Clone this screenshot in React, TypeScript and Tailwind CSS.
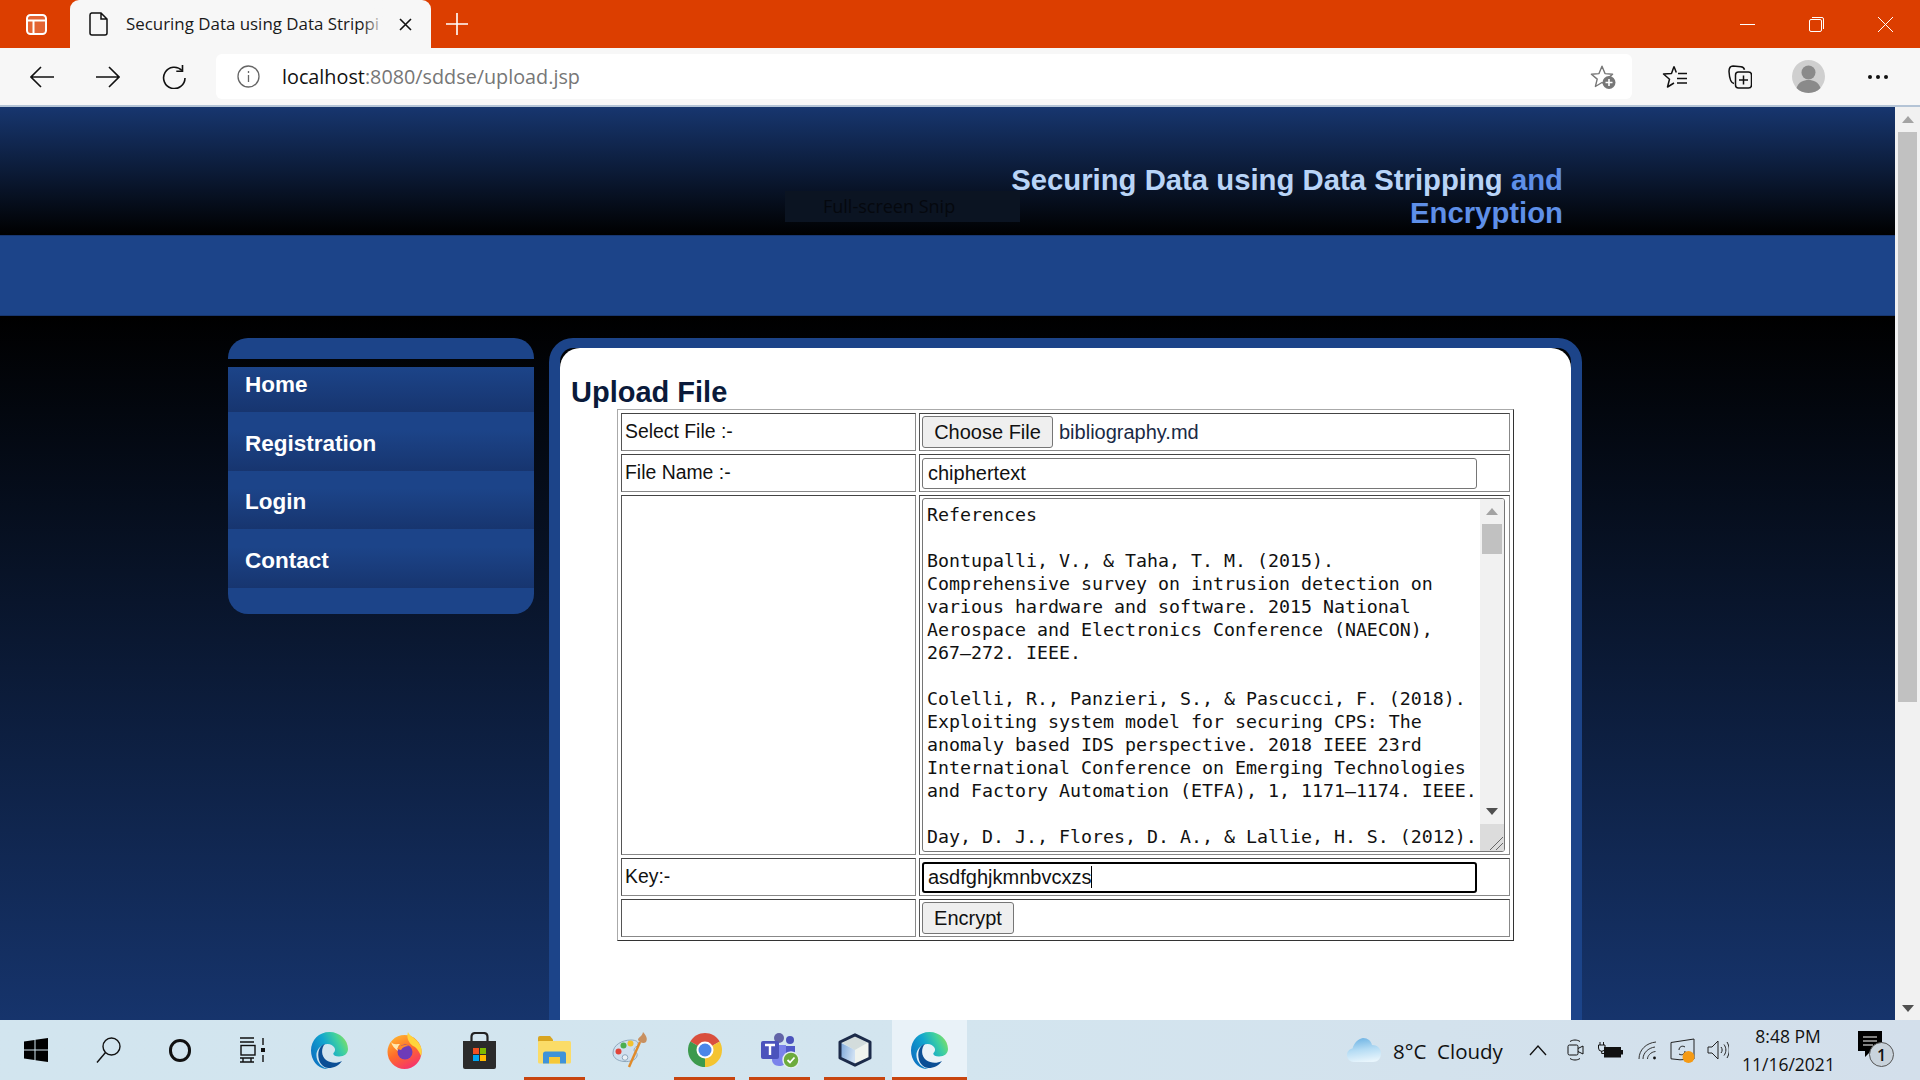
import type { ReactNode } from 'react';

const LINES = [
  'References',
  '',
  'Bontupalli, V., & Taha, T. M. (2015).',
  'Comprehensive survey on intrusion detection on',
  'various hardware and software. 2015 National',
  'Aerospace and Electronics Conference (NAECON),',
  '267–272. IEEE.',
  '',
  'Colelli, R., Panzieri, S., & Pascucci, F. (2018).',
  'Exploiting system model for securing CPS: The',
  'anomaly based IDS perspective. 2018 IEEE 23rd',
  'International Conference on Emerging Technologies',
  'and Factory Automation (ETFA), 1, 1171–1174. IEEE.',
  '',
  'Day, D. J., Flores, D. A., & Lallie, H. S. (2012).',
];

const NAV = ['Registration', 'Login', 'Contact'];

const labelCell =
  'border border-t-[#444] border-l-[#555] border-r-[#888] border-b-[#888] pl-[3px] align-middle text-[19.4px] text-[#111]';
const controlCell =
  'border border-t-[#444] border-l-[#555] border-r-[#888] border-b-[#888] pl-[2px] align-middle';
const buttonClass =
  'rounded-[3px] border border-[#767676] bg-[#efefef] text-[20px] leading-none text-[#111]';

/* ---------- browser chrome icons ---------- */

function BackIcon({ flip }: { flip?: boolean }) {
  return (
    <svg width="24" height="22" viewBox="0 0 24 22" fill="none" stroke="#111" strokeWidth="1.6" className={flip ? '-scale-x-100' : ''}>
      <path d="M24 11H1M11 1 1 11l10 10" />
    </svg>
  );
}

function ReloadIcon() {
  return (
    <svg width="24" height="24" viewBox="0 0 24 24" fill="none" stroke="#111" strokeWidth="1.6">
      <path d="M20 5.5A10.7 10.7 0 1 0 23 13" />
      <path d="M20.5 0v6.2h-6.2" />
    </svg>
  );
}

function StarAddIcon() {
  return (
    <svg width="26" height="24" viewBox="0 0 26 24" fill="none">
      <path d="M12 1.2 15 8.6l7.6.6-5.8 4.9 1.8 7.4L12 17.5l-6.6 4 1.8-7.4L1.4 9.2 9 8.6Z" stroke="#777" strokeWidth="1.4" strokeLinejoin="round" />
      <circle cx="19" cy="17.5" r="6.5" fill="#777" />
      <path d="M19 14v7M15.5 17.5h7" stroke="#fff" strokeWidth="1.6" />
    </svg>
  );
}

function FavoritesIcon() {
  return (
    <svg width="26" height="24" viewBox="0 0 26 24" fill="none" stroke="#111" strokeWidth="1.5" strokeLinejoin="round">
      <path d="M12 1.5 9.5 8.5 1.5 9l6 5.2L5.5 22l6.5-4M12 1.5l2.3 6" />
      <path d="M16 8.5h9M15 13.5h10M15 18h10" />
    </svg>
  );
}

function CollectionsIcon() {
  return (
    <svg width="24" height="24" viewBox="0 0 24 24" fill="none" stroke="#111" strokeWidth="1.5">
      <path d="M6 18.5C3 18 1.5 15 1 6.5 1 3 2 1 5 1l8 .8c2 .2 3 1.2 3.5 3" />
      <rect x="7.5" y="7" width="16" height="16" rx="3" />
      <path d="M15.5 10.5v9M11 15h9" />
    </svg>
  );
}

function ProfileIcon() {
  return (
    <svg width="33" height="33" viewBox="0 0 33 33">
      <circle cx="16.5" cy="16.5" r="16.5" fill="#cfcfcf" />
      <circle cx="16.5" cy="12.5" r="7" fill="#8a8a8a" />
      <path d="M4.5 28c2-6 7-8 12-8s10 2 12 8c-6 6.5-18 6.5-24 0Z" fill="#8a8a8a" />
    </svg>
  );
}

/* ---------- taskbar app icons ---------- */

function EdgeIcon() {
  return (
    <svg width="37" height="37" viewBox="0 0 37 37">
      <defs>
        <linearGradient id="edge-a" x1="0" y1="0.8" x2="1" y2="0.3">
          <stop offset="0" stopColor="#0c6cc0" />
          <stop offset="0.5" stopColor="#12a6cf" />
          <stop offset="0.8" stopColor="#3fd0a0" />
          <stop offset="1" stopColor="#7bdc6a" />
        </linearGradient>
      </defs>
      <path d="M18.5 0C29 0 37 8 37 17c0 4.5-3.5 7.5-9 7.5-4 0-6.5-1.5-5.500-3.500 1.500-1.500 2-3.200 1-5.200-2-3.800-7-5-11.500-2.800-6 3-8 9.500-5.500 15.500 2 4.500 6 7.500 11 8.500C8 38 0 29 0 18.500 0 8 8 0 18.500 0Z" fill="url(#edge-a)" />
      <path d="M8 28C6 21 8 14 14 11.800 10 16 10 24 15 28c5 3.500 11 3.500 16 1-3 4.500-8 7-13.500 7-4 0-8-3.500-9.500-8Z" fill="#0b4f95" />
    </svg>
  );
}

function FirefoxIcon() {
  return (
    <svg width="35" height="37" viewBox="0 0 35 37">
      <defs>
        <linearGradient id="ff-a" x1="0.2" y1="0" x2="0.7" y2="1">
          <stop offset="0" stopColor="#ffb52e" />
          <stop offset="0.5" stopColor="#ff6a2b" />
          <stop offset="1" stopColor="#f5306f" />
        </linearGradient>
      </defs>
      <circle cx="17.5" cy="20" r="17" fill="url(#ff-a)" />
      <path d="M21 0c1 4 10 7 13 15 1 3 1 6 0 9-2-5-5-9-8-10-4-3-7-8-5-14Z" fill="#ffd43b" />
      <path d="M4 10c2 3 6 2 9 2-2 2-3 4-2 7-3-2-6-5-7-9Z" fill="#ffe9b0" />
      <circle cx="18" cy="20" r="7.5" fill="#6e3bb8" />
      <path d="M10 17c2-4 9-5 12-3-4 0-6 1-8 4Z" fill="#ff8a2b" />
    </svg>
  );
}

function StoreIcon() {
  return (
    <svg width="35" height="37" viewBox="0 0 35 37">
      <path d="M9.5 10V5c0-2.500 1.500-4 4-4h8c2.500 0 4 1.500 4 4v5" fill="none" stroke="#222" strokeWidth="2.2" />
      <path d="M1 9h33v26a2 2 0 0 1-2 2H3a2 2 0 0 1-2-2Z" fill="#2b2b2b" />
      <rect x="11" y="16" width="6" height="6" fill="#f25022" />
      <rect x="18" y="16" width="6" height="6" fill="#7fba00" />
      <rect x="11" y="23" width="6" height="6" fill="#00a4ef" />
      <rect x="18" y="23" width="6" height="6" fill="#ffb900" />
    </svg>
  );
}

function ExplorerIcon() {
  return (
    <svg width="33" height="28" viewBox="0 0 33 28">
      <path d="M0 2a2 2 0 0 1 2-2h10l3 3.5v2H0Z" fill="#d9a520" />
      <rect x="0" y="5" width="33" height="22.5" rx="1.5" fill="#fbdc68" />
      <path d="M5 27.5V18a2.500 2.500 0 0 1 2.500-2.500h18A2.500 2.500 0 0 1 28 18v9.500h-6V21H11v6.500Z" fill="#3f93d9" />
      <rect x="11" y="21" width="11" height="6.5" fill="#f6c838" />
    </svg>
  );
}

function PaintIcon() {
  return (
    <svg width="36" height="36" viewBox="0 0 36 36">
      <path d="M1 21c0-8 9-13 18-13 5 0 8 2 7 5-1 2-4 2-4 5 0 2 4 2 3 6-1 4-7 6-13 5.500C6 29 1 26 1 21Z" fill="#cfe0ef" stroke="#8fa8bd" />
      <circle cx="6.5" cy="19.5" r="3" fill="#e0453a" />
      <circle cx="11.5" cy="13.5" r="3" fill="#4cae4f" />
      <circle cx="18.5" cy="11.5" r="3" fill="#f2c230" />
      <circle cx="13" cy="25.5" r="2.8" fill="#eaf1f7" stroke="#8fa8bd" />
      <path d="M28 10 17 35" stroke="#e08a2a" strokeWidth="2.4" />
      <path d="M26 8c0-3 4-3 5-8 3 3 5 7 3 10-2 2-6 1-8-2Z" fill="#c89060" />
    </svg>
  );
}

function ChromeIcon() {
  return (
    <svg width="34" height="34" viewBox="0 0 34 34">
      <path d="M17 17 2.3 8.500A17 17 0 0 1 31.700 8.500Z" fill="#d94f3d" />
      <path d="M17 17 31.700 8.500A17 17 0 0 1 17 34Z" fill="#f4c430" />
      <path d="M17 17 17 34A17 17 0 0 1 2.300 8.500Z" fill="#3c9a4d" />
      <circle cx="17" cy="17" r="8.5" fill="#fff" />
      <circle cx="17" cy="17" r="6.5" fill="#4a86e8" />
    </svg>
  );
}

function TeamsIcon() {
  return (
    <svg width="40" height="36" viewBox="0 0 40 36">
      <circle cx="19" cy="6" r="5" fill="#6264a7" />
      <circle cx="30" cy="8" r="4" fill="#4b53bc" />
      <path d="M12 13h14v16c0 3-3 5-7 5s-7-3-7-6Z" fill="#7b83eb" />
      <path d="M26 14h9v11c0 3-3 4-9 4Z" fill="#5059c9" />
      <rect x="1" y="9" width="18" height="18" rx="2" fill="#4b53bc" />
      <path d="M5 13h10M10 13v10" stroke="#fff" strokeWidth="2.4" />
      <circle cx="31" cy="28" r="8" fill="#6dab3c" stroke="#e4eef0" strokeWidth="1.5" />
      <path d="m27.5 28 2.500 2.500 4.500-5" fill="none" stroke="#fff" strokeWidth="1.8" />
    </svg>
  );
}

function CubeIcon() {
  return (
    <svg width="34" height="34" viewBox="0 0 34 34">
      <defs>
        <linearGradient id="cube-a" x1="0" y1="0" x2="1" y2="0.3">
          <stop offset="0" stopColor="#7ea8da" />
          <stop offset="1" stopColor="#cfe0f3" />
        </linearGradient>
      </defs>
      <path d="M3 10 17 17v15L3 25Z" fill="url(#cube-a)" />
      <path d="M3 9 17 2l14 7-14 8Z" fill="#d3dcdc" />
      <path d="M17 17l14-8v16l-14 7Z" fill="#f0f3ee" />
      <path d="M17 1.800 32 9v16l-15 7.200L2 25V9Z" fill="none" stroke="#1c2b4a" strokeWidth="3" strokeLinejoin="round" />
    </svg>
  );
}

/* ---------- tray icons ---------- */

function CloudIcon() {
  return (
    <svg width="34" height="26" viewBox="0 0 34 26">
      <defs>
        <linearGradient id="cloud-a" x1="0.3" y1="0" x2="0.5" y2="1">
          <stop offset="0" stopColor="#6fb4e4" />
          <stop offset="0.5" stopColor="#b5dcf4" />
          <stop offset="1" stopColor="#e8f5fc" />
        </linearGradient>
      </defs>
      <path d="M7 25C3 25 0 22 0 18c0-3.500 2.500-6 5.500-6.500C7 6 11 2 16 1c5 0 8 3 9 7 5 0 9 3 9 8.500 0 5-3.500 8.500-8 8.500Z" fill="url(#cloud-a)" />
    </svg>
  );
}

function CameraIcon() {
  return (
    <svg width="18" height="22" viewBox="0 0 18 22" fill="none" stroke="#111" strokeWidth="1">
      <path d="M3 2.500C6 .5 10 .5 13 2.500M3 19.500c3 2 7 2 10 0" />
      <rect x="1" y="6" width="10" height="10" rx="1.5" />
      <path d="m11 9.500 5-2.500v8l-5-2.500" />
    </svg>
  );
}

function BatteryIcon() {
  return (
    <svg width="25" height="17" viewBox="0 0 25 17" fill="none">
      <path d="M2 0v3M5.500 0v3M.5 3h6.500v3a3.200 3.200 0 0 1-6.500 0ZM3.700 9v2.500H6" stroke="#111" strokeWidth="1" />
      <rect x="6" y="5" width="17" height="10.5" fill="#111" />
      <rect x="23" y="8" width="2" height="4.5" fill="#111" />
    </svg>
  );
}

function WifiIcon() {
  return (
    <svg width="19" height="19" viewBox="0 0 19 19" fill="none" stroke="#333" strokeWidth="1">
      <path d="M1 18C1 9 8 2 18 1M5 18c0-6 5-11 12-12M9.500 18c0-3 3-7 8-7.500" />
      <circle cx="16.5" cy="17" r="1.4" fill="#111" stroke="none" />
    </svg>
  );
}

function SyncIcon() {
  return (
    <svg width="25" height="25" viewBox="0 0 25 25">
      <path d="M1 4.500 24 1v20l-14 .8-9-1Z" fill="none" stroke="#222" strokeWidth="1" />
      <path d="M15 9c-3-2-6 0-6 3M9 16c3 2 6 0 6-3" fill="none" stroke="#222" strokeWidth="1" />
      <circle cx="18.5" cy="19" r="6" fill="#f59a14" />
    </svg>
  );
}

function SpeakerIcon() {
  return (
    <svg width="22" height="22" viewBox="0 0 22 22" fill="none" stroke="#222" strokeWidth="1">
      <path d="M1 8h4l6-6v18l-6-6H1Z" />
      <path d="M14 8c1.500 2 1.500 4 0 6M17 5.500c2.500 3.500 2.500 7.500 0 11M20 3c3 5 3 11 0 16" />
    </svg>
  );
}

function TriangleIcon({ down, color }: { down?: boolean; color: string }) {
  return (
    <svg width="12" height="7" viewBox="0 0 12 7" className={down ? 'rotate-180' : ''}>
      <path d="M6 0 12 7H0Z" fill={color} />
    </svg>
  );
}

function TaskSlot({ children, mark, active }: { children: ReactNode; mark?: boolean; active?: boolean }) {
  return (
    <div className={`relative flex h-full w-[75px] items-center justify-center ${active ? 'bg-[#e9f2f8]' : ''}`}>
      {children}
      {(mark || active) && (
        <div className={`absolute bottom-0 h-[3px] bg-[#c8450f] ${active ? 'inset-x-0' : 'left-[7px] w-[61px]'}`} />
      )}
    </div>
  );
}

export default function App() {
  return (
    <div className="flex h-[1080px] w-[1920px] flex-col overflow-hidden font-['Liberation_Sans',sans-serif]">
      {/* Tab strip */}
      <div className="flex h-12 shrink-0 items-center bg-[#dc3e00] text-white">
        <div className="flex w-[70px] justify-center pl-[2px]">
          <svg width="21" height="21" viewBox="0 0 21 21" fill="#ffffff33" stroke="#fff" strokeWidth="2">
            <rect x="1" y="1" width="19" height="19" rx="3.5" />
            <path d="M1 6.500h19M7.500 6.500V20" />
          </svg>
        </div>
        <div className="relative flex h-12 w-[361px] items-center rounded-t-[9px] bg-[#f7f7f7] pl-[19px] font-['Open_Sans',sans-serif] text-[#1a1a1a]">
          <svg width="19" height="24" viewBox="0 0 19 24" fill="none" stroke="#111" strokeWidth="1.5">
            <path d="M2.500 1H12l6 6v14a2 2 0 0 1-2 2H3a2 2 0 0 1-2-2V3a2 2 0 0 1 1.500-2ZM12 1v6h6" />
          </svg>
          <span className="ml-[18px] w-[262px] whitespace-nowrap text-[16.9px]">Securing Data using Data Strippi</span>
          <div className="absolute left-[292px] top-0 h-12 w-[24px] bg-gradient-to-r from-transparent to-[#f7f7f7]" />
          <svg className="ml-[11px]" width="13" height="13" viewBox="0 0 13 13" stroke="#111" strokeWidth="1.6">
            <path d="m1 1 11 11M12 1 1 12" />
          </svg>
        </div>
        <svg className="ml-[15px]" width="22" height="22" viewBox="0 0 22 22" stroke="#fff" strokeWidth="1.6">
          <path d="M11 0v22M0 11h22" />
        </svg>
        <div className="ml-auto flex items-center gap-[54px] pr-[27px]">
          <svg width="15" height="15" viewBox="0 0 15 15" stroke="#fff" strokeWidth="1">
            <path d="M0 7.500h15" />
          </svg>
          <svg width="15" height="15" viewBox="0 0 15 15" fill="none" stroke="#fff" strokeWidth="1">
            <rect x="0.5" y="2.5" width="12" height="12" rx="1.5" />
            <path d="M3 .5h10a1.500 1.500 0 0 1 1.500 1.500v10" />
          </svg>
          <svg width="15" height="15" viewBox="0 0 15 15" stroke="#fff" strokeWidth="1">
            <path d="m0 0 15 15M15 0 0 15" />
          </svg>
        </div>
      </div>

      {/* Toolbar */}
      <div className="flex h-[59px] shrink-0 items-center border-b-2 border-[#b4c4d6] bg-[#f7f7f7] pl-[30px]">
        <BackIcon />
        <div className="ml-[42px]">
          <BackIcon flip />
        </div>
        <div className="ml-[42px]">
          <ReloadIcon />
        </div>
        <div className="ml-[30px] flex h-[45px] w-[1416px] items-center rounded-[6px] bg-white pl-[21px] font-['Open_Sans',sans-serif]">
          <svg width="23" height="23" viewBox="0 0 23 23" fill="none" stroke="#666" strokeWidth="1.3">
            <circle cx="11.5" cy="11.5" r="10.5" />
            <path d="M11.500 10v7M11.500 6v2" />
          </svg>
          <span className="ml-[22px] text-[19.8px] text-[#111]">
            localhost<span className="text-[#767676]">:8080/sddse/upload.jsp</span>
          </span>
          <div className="ml-auto pr-[16px]">
            <StarAddIcon />
          </div>
        </div>
        <div className="ml-[30px]">
          <FavoritesIcon />
        </div>
        <div className="ml-[40px]">
          <CollectionsIcon />
        </div>
        <div className="ml-[40px]">
          <ProfileIcon />
        </div>
        <div className="ml-[43px] flex gap-[4px]">
          <div className="h-1 w-1 rounded-full bg-[#111]" />
          <div className="h-1 w-1 rounded-full bg-[#111]" />
          <div className="h-1 w-1 rounded-full bg-[#111]" />
        </div>
      </div>

      {/* Page + scrollbar */}
      <div className="flex min-h-0 flex-1">
        <div className="flex min-w-0 flex-1 flex-col overflow-hidden">
          <header className="relative h-[128px] shrink-0 bg-linear-to-b/srgb from-[#17366f] to-black pr-[332px] pt-[56px]">
            <h1 className="text-right text-[29.3px] font-bold leading-[33px] text-[#b9d4f7]">
              <span>Securing Data using Data Stripping </span>
              <span className="text-[#5e8fe8]">and</span>
              <br />
              <span className="text-[#5e8fe8]">Encryption</span>
            </h1>
            {/* snipping tool hint left over on the capture */}
            <div className="absolute left-[785px] top-[84px] flex h-[31px] w-[235px] items-center bg-[#0b1422] pl-[38px] font-['Open_Sans',sans-serif] text-[18px] text-[#05080e]">
              Full-screen Snip
            </div>
          </header>
          <div className="h-[81px] shrink-0 border-y border-[#17366f] bg-[#1c4489]" />

          <div className="flex min-h-0 flex-1 gap-[15px] bg-linear-to-b/srgb from-black to-[#16346c] pl-[228px] pt-[22px]">
            <nav className="w-[306px] shrink-0">
              <div className="h-[21px] rounded-t-[20px] bg-[#1c4489]" />
              <div className="mt-[8px] flex h-[45px] items-end bg-linear-to-b/srgb from-[#1c4489] to-[#17356f] pb-[14px] pl-[17px] text-[22.5px] font-bold leading-[26px] text-white">
                Home
              </div>
              {NAV.map((item) => (
                <div
                  key={item}
                  className="flex h-[58.5px] items-end bg-linear-to-b/srgb from-[#1c4489] from-30% to-[#17356f] pb-[14px] pl-[17px] text-[22.5px] font-bold leading-[26px] text-white"
                >
                  {item}
                </div>
              ))}
              <div className="h-[26px] rounded-b-[20px] bg-[#1c4489]" />
            </nav>

            <main className="w-[1033px] shrink-0 rounded-t-[24px] border-x-[11px] border-t-[10px] border-[#1c4489]">
              <div className="h-full rounded-t-[20px] bg-white pl-[11px] pt-[28px]">
                <h2 className="text-[29px] font-bold leading-[33px] text-[#0a1a3a]">Upload File</h2>
                <table className="ml-[46px] w-[897px] table-fixed border-separate border-spacing-[3px] border border-b-[#333] border-l-[#aaa] border-r-[#333] border-t-[#aaa]">
                  <colgroup>
                    <col className="w-[295px]" />
                    <col />
                  </colgroup>
                  <tbody>
                    <tr className="h-[38px]">
                      <td className={labelCell}>Select File :-</td>
                      <td className={controlCell}>
                        <div className="flex items-center">
                          <button className={`h-[32px] w-[131px] ${buttonClass}`}>Choose File</button>
                          <span className="ml-[6px] text-[20px] text-[#1a2a45]">bibliography.md</span>
                        </div>
                      </td>
                    </tr>
                    <tr className="h-[38px]">
                      <td className={labelCell}>File Name :-</td>
                      <td className={controlCell}>
                        <div className="flex h-[31px] w-[555px] items-center rounded-[3px] border border-[#767676] pl-[5px] text-[20px] text-[#111]">
                          chiphertext
                        </div>
                      </td>
                    </tr>
                    <tr className="h-[360px]">
                      <td className={labelCell} />
                      <td className={controlCell}>
                        <div className="flex h-[354px] w-[583px] overflow-hidden rounded-[3px] border border-[#767676]">
                          <div className="min-w-0 flex-1 overflow-hidden whitespace-pre pl-[4px] pt-[4px] font-['DejaVu_Sans_Mono',monospace] text-[18.27px] leading-[23.03px] text-[#111]">
                            {LINES.join('\n')}
                          </div>
                          <div className="flex w-[24px] shrink-0 flex-col bg-[#f1f1f1]">
                            <div className="flex h-[25px] items-center justify-center">
                              <TriangleIcon color="#a3a3a3" />
                            </div>
                            <div className="mx-[2px] h-[30px] bg-[#c1c1c1]" />
                            <div className="flex-1" />
                            <div className="flex h-[25px] items-center justify-center">
                              <TriangleIcon down color="#505050" />
                            </div>
                            <div className="flex h-[27px] items-end justify-end bg-[#dcdcdc] pb-[1px] pr-[1px]">
                              <svg width="14" height="14" viewBox="0 0 14 14" stroke="#666" strokeWidth="1">
                                <path d="M1 14 14 1M7 14l7-7" />
                              </svg>
                            </div>
                          </div>
                        </div>
                      </td>
                    </tr>
                    <tr className="h-[38px]">
                      <td className={labelCell}>Key:-</td>
                      <td className={controlCell}>
                        <div className="flex h-[31px] w-[555px] items-center rounded-[3px] border-2 border-black pl-[4px] text-[20px] text-[#111]">
                          asdfghjkmnbvcxzs
                          <div className="h-[22px] w-px bg-black" />
                        </div>
                      </td>
                    </tr>
                    <tr className="h-[38px]">
                      <td className={labelCell} />
                      <td className={controlCell}>
                        <button className={`h-[32px] w-[92px] ${buttonClass}`}>Encrypt</button>
                      </td>
                    </tr>
                  </tbody>
                </table>
              </div>
            </main>
          </div>
        </div>

        <div className="flex w-[25px] shrink-0 flex-col bg-[#f1f1f1] px-[3px]">
          <div className="flex h-[25px] items-center justify-center">
            <TriangleIcon color="#a3a3a3" />
          </div>
          <div className="h-[570px] bg-[#c1c1c1]" />
          <div className="flex-1" />
          <div className="flex h-[24px] items-center justify-center">
            <TriangleIcon down color="#505050" />
          </div>
        </div>
      </div>

      {/* Taskbar */}
      <div className="flex h-[60px] shrink-0 items-center bg-gradient-to-r from-[#d2e5ef] via-[#d3e5ef] to-[#d3dfeb] font-['Open_Sans',sans-serif] text-[#111]">
        <div className="flex w-[72px] justify-center">
          <svg width="24" height="24" viewBox="0 0 24 24" fill="#000">
            <path d="M0 3.500 10.500 2v9.500H0ZM11.500 1.800 24 0v11.500H11.500ZM0 12.500h10.500V22L0 20.500ZM11.500 12.500H24V24l-12.500-1.800Z" />
          </svg>
        </div>
        <div className="flex w-[72px] justify-center">
          <svg width="25" height="26" viewBox="0 0 25 26" fill="none" stroke="#111" strokeWidth="1.4">
            <circle cx="15.5" cy="9.5" r="8.5" />
            <path d="M9.500 15.500 1 25.500" />
          </svg>
        </div>
        <div className="flex w-[72px] justify-center">
          <div className="h-[23px] w-[22px] rounded-full border-[3.5px] border-[#111]" />
        </div>
        <div className="flex w-[72px] justify-center">
          <svg width="25" height="26" viewBox="0 0 25 26" fill="none" stroke="#111" strokeWidth="1.4">
            <path d="M0 1h14M0 5h14M0 21h14M0 25h14M3 25v-4M11 25v-4" />
            <rect x="1" y="8.5" width="14" height="9.5" />
            <rect x="21" y="11" width="4" height="4" fill="#111" stroke="none" />
            <path d="M23 1v7M23 18v7" />
          </svg>
        </div>
        <div className="ml-[4px] flex h-full">
          <TaskSlot>
            <EdgeIcon />
          </TaskSlot>
          <TaskSlot>
            <FirefoxIcon />
          </TaskSlot>
          <TaskSlot>
            <StoreIcon />
          </TaskSlot>
          <TaskSlot mark>
            <ExplorerIcon />
          </TaskSlot>
          <TaskSlot>
            <PaintIcon />
          </TaskSlot>
          <TaskSlot mark>
            <ChromeIcon />
          </TaskSlot>
          <TaskSlot mark>
            <TeamsIcon />
          </TaskSlot>
          <TaskSlot mark>
            <CubeIcon />
          </TaskSlot>
          <TaskSlot active>
            <EdgeIcon />
          </TaskSlot>
        </div>

        <div className="ml-auto flex items-center pr-[26px]">
          <CloudIcon />
          <span className="ml-[12px] mt-[2px] w-[110px] whitespace-pre text-[20.5px]">8°C  Cloudy</span>
          <svg className="ml-[26px]" width="18" height="12" viewBox="0 0 18 12" fill="none" stroke="#111" strokeWidth="1.3">
            <path d="m1 11 8-9 8 9" />
          </svg>
          <div className="ml-[20px]">
            <CameraIcon />
          </div>
          <div className="ml-[13px]">
            <BatteryIcon />
          </div>
          <div className="ml-[15px]">
            <WifiIcon />
          </div>
          <div className="ml-[13px]">
            <SyncIcon />
          </div>
          <div className="ml-[12px]">
            <SpeakerIcon />
          </div>
          <div className="ml-[13px] w-[92px] text-center text-[17.5px] leading-[28px]">
            <div>8:48 PM</div>
            <div>11/16/2021</div>
          </div>
          <div className="relative ml-[24px] h-[38px] w-[36px]">
            <svg width="24" height="28" viewBox="0 0 24 28">
              <path d="M0 0h24v20h-11l-6 6v-6H0Z" fill="#000" />
              <path d="M5 6h14M5 10h14M5 14h10" stroke="#fff" strokeWidth="1.2" />
            </svg>
            {/* unread count badge */}
            <div className="absolute left-[11px] top-[11px] flex h-[25px] w-[25px] items-center justify-center rounded-full border border-[#555] bg-[#c9d3dc] text-[16px] font-semibold leading-none">
              1
            </div>
          </div>
        </div>
      </div>
    </div>
  );
}
